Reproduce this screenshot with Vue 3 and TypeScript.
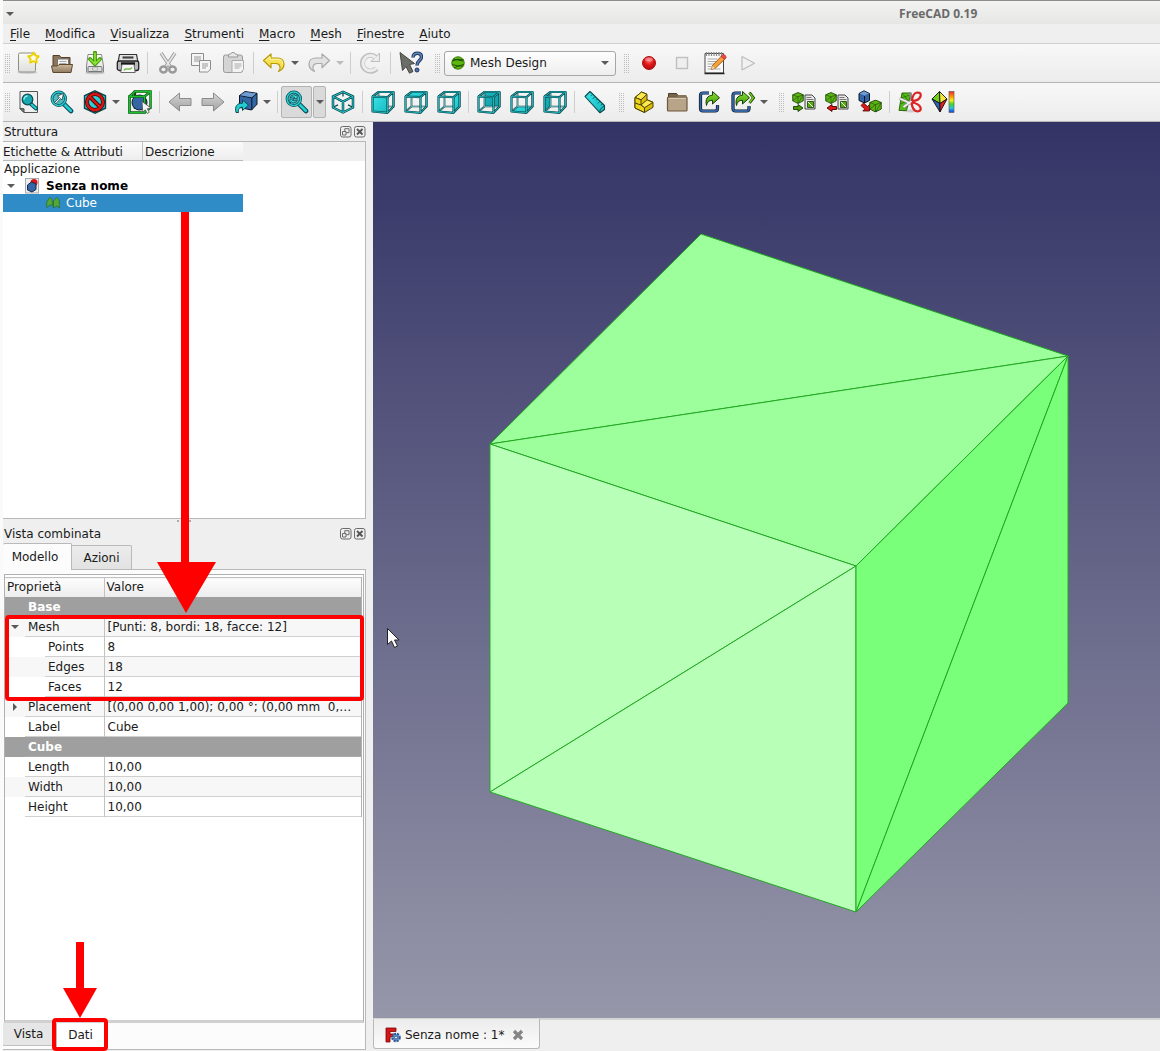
<script setup lang="ts">
import { ref } from 'vue'

type Kind = 'handle' | 'sep' | 'btn' | 'menu' | 'combo' | 'split'
interface Item {
  kind: Kind
  icon?: string
  label?: string
  off?: boolean
}
interface Row {
  name: string
  value?: string
  kind: 'group' | 'prop' | 'child'
  alt?: boolean
  arrow?: 'open' | 'closed'
  marked?: boolean
}

const b = (icon: string, label: string, off = false): Item => ({ kind: 'btn', icon, label, off })
const sep: Item = { kind: 'sep' }
const handle: Item = { kind: 'handle' }
const menu = (label: string, off = false): Item => ({ kind: 'menu', label, off })

const menus = ['File', 'Modifica', 'Visualizza', 'Strumenti', 'Macro', 'Mesh', 'Finestre', 'Aiuto']

const toolbars: Item[][] = [
  [
    handle, b('new', 'Nuovo'), b('open', 'Apri'), b('save', 'Salva'), b('print', 'Stampa'), sep,
    b('cut', 'Taglia', true), b('copy', 'Copia', true), b('paste', 'Incolla', true), sep,
    b('undo', 'Annulla'), menu('Cronologia annulla'), b('redo', 'Ripristina', true), menu('Cronologia ripristina', true), sep,
    b('refresh', 'Aggiorna', true), sep, b('whats', "Che cos'è?"),
    handle, { kind: 'combo' },
    handle, b('record', 'Registra macro'), b('stop', 'Ferma macro', true), b('edit', 'Modifica macro'), b('play', 'Esegui macro', true),
  ],
  [
    handle, b('fitall', 'Adatta tutto'), b('fitsel', 'Adatta selezione'), b('style', 'Stile'), menu('Stili'), b('bbox', 'Selezione'), sep,
    b('back', 'Indietro'), b('forward', 'Avanti'), b('link', 'Vai al collegamento'), menu('Collegamenti'), sep,
    { kind: 'split', icon: 'sync', label: 'Vista sincronizzata' }, b('iso', 'Isometrica'), sep,
    b('front', 'Frontale'), b('top', 'Superiore'), b('right', 'Destra'), sep,
    b('rear', 'Posteriore'), b('bottom', 'Inferiore'), b('left', 'Sinistra'), sep, b('ruler', 'Misura'),
    handle, b('part', 'Parte'), b('group', 'Gruppo'), b('export', 'Crea link'), b('exports', 'Azioni link'), menu('Link'),
    handle, b('mimport', 'Importa mesh'), b('mexport', 'Esporta mesh'), b('mshape', 'Crea mesh'), sep,
    b('mcut', 'Taglia mesh'), b('mcurv', 'Curvatura'),
  ],
]

const rows: Row[] = [
  { name: 'Base', kind: 'group' },
  { name: 'Mesh', value: '[Punti: 8, bordi: 18, facce: 12]', kind: 'prop', alt: true, arrow: 'open', marked: true },
  { name: 'Points', value: '8', kind: 'child' },
  { name: 'Edges', value: '18', kind: 'child', alt: true },
  { name: 'Faces', value: '12', kind: 'child' },
  { name: 'Placement', value: '[(0,00 0,00 1,00); 0,00 °; (0,00 mm  0,…', kind: 'prop', alt: true, arrow: 'closed' },
  { name: 'Label', value: 'Cube', kind: 'prop' },
  { name: 'Cube', kind: 'group' },
  { name: 'Length', value: '10,00', kind: 'prop' },
  { name: 'Width', value: '10,00', kind: 'prop', alt: true },
  { name: 'Height', value: '10,00', kind: 'prop' },
]

const workbench = ref('Mesh Design')
</script>

<template>
  <div class="window">
    <svg class="defs" aria-hidden="true">
      <defs>
        <linearGradient id="g-page" x1="0" y1="0" x2="0" y2="1"><stop offset="0" stop-color="#fbfbf8" /><stop offset="1" stop-color="#dededb" /></linearGradient>
        <linearGradient id="g-grey" x1="0" y1="0" x2="0" y2="1"><stop offset="0" stop-color="#d5d5d5" /><stop offset="1" stop-color="#a2a2a2" /></linearGradient>
        <linearGradient id="g-fold" x1="0" y1="0" x2="0" y2="1"><stop offset="0" stop-color="#cbb99e" /><stop offset="1" stop-color="#8f7a5e" /></linearGradient>
        <linearGradient id="g-teal" x1="0" y1="0" x2="1" y2="1"><stop offset="0" stop-color="#3ae4e8" /><stop offset="1" stop-color="#16b9bf" /></linearGradient>
        <linearGradient id="g-teald" x1="0" y1="0" x2="1" y2="1"><stop offset="0" stop-color="#1bb8bf" /><stop offset="1" stop-color="#129aa2" /></linearGradient>
        <linearGradient id="g-green" x1="0" y1="0" x2="0" y2="1"><stop offset="0" stop-color="#8be234" /><stop offset="1" stop-color="#3f9a06" /></linearGradient>
        <linearGradient id="g-rain" x1="0" y1="0" x2="0" y2="1"><stop offset="0" stop-color="#ef2929" /><stop offset=".25" stop-color="#ff9a00" /><stop offset=".42" stop-color="#f5ee20" /><stop offset=".6" stop-color="#46d32a" /><stop offset=".78" stop-color="#2ac5e0" /><stop offset="1" stop-color="#1a37d8" /></linearGradient>
        <radialGradient id="g-red" cx=".5" cy=".3" r=".7"><stop offset="0" stop-color="#ff7070" /><stop offset=".5" stop-color="#e01818" /><stop offset="1" stop-color="#b00808" /></radialGradient>
      </defs>

      <symbol id="i-new" viewBox="0 0 24 24"><ellipse cx="10.500" cy="21.500" rx="10" ry="1.500" fill="#ccc" /><rect x="1.500" y="2" width="17" height="19" rx="1.500" fill="url(#g-page)" stroke="#8d8d88" /><path d="M16.400 1.500l1.800 3.100 3.500.7-2.400 2.700.4 3.600-3.300-1.500-3.200 1.500.4-3.600-2.400-2.700 3.500-.7z" fill="#fffef0" stroke="#ecd200" stroke-width="1.900" stroke-linejoin="round" /></symbol>
      <symbol id="i-open" viewBox="0 0 24 24"><path d="M3 18V4.500h6.500l1.500 2h9V18z" fill="#8c7558" stroke="#553f24" /><rect x="7.500" y="8" width="11" height="8" fill="#f4f4f4" stroke="#777" /><path d="M9.500 10.500h7m-7 2h7" stroke="#aaa" /><path d="M1.500 15h6l1.500-1.500h13.500L21 21.500H3z" fill="url(#g-fold)" stroke="#5e482c" /></symbol>
      <symbol id="i-save" viewBox="0 0 24 24"><ellipse cx="12" cy="22" rx="10" ry="1.500" fill="#ccc" /><path d="M5 3.500h13.500L20.500 15v6h-17v-6z" fill="url(#g-page)" stroke="#888" /><rect x="5" y="15.500" width="14" height="5" rx="1" fill="#ddd" stroke="#777" /><rect x="9.500" y="17" width="5" height="2" fill="#fff" stroke="#888" stroke-width=".6" /><path d="M12 1.500v11M7 8l5 5.200L17 8" fill="none" stroke="#3f9a06" stroke-width="3.800" stroke-linejoin="round" stroke-linecap="round" /><path d="M12 2v10.500M7.200 8.300L12 13l4.800-4.700" fill="none" stroke="#8be234" stroke-width="1.700" stroke-linecap="round" /></symbol>
      <symbol id="i-print" viewBox="0 0 24 24"><path d="M3.500 3.500h17l1.500 8H2z" fill="#e4e4e4" stroke="#333" stroke-width="1.200" /><path d="M6.500 6.500h11" stroke="#444" stroke-width="2.200" /><rect x="1.300" y="10" width="21.400" height="9.500" rx="2" fill="#b9b9b9" stroke="#222" stroke-width="1.300" /><path d="M5 12.800h14" stroke="#181818" stroke-width="3" /><path d="M6 13.500h12l1.200 8H4.800z" fill="#f8f8f8" stroke="#666" /><path d="M8 19.500c2-4 5 1 8-3" stroke="#82c464" stroke-width="1.700" fill="none" /></symbol>
      <symbol id="i-cut" viewBox="0 0 24 24"><path d="M5 2l9.500 14M19 2L9.500 16" stroke="#999" stroke-width="3.400" /><path d="M5 2l9.500 14M19 2L9.500 16" stroke="#e7e7e7" stroke-width="1.600" /><g fill="none" stroke="#999" stroke-width="2.400"><ellipse cx="7.500" cy="18.500" rx="3.300" ry="3" /><ellipse cx="16.500" cy="18.500" rx="3.300" ry="3" /></g></symbol>
      <symbol id="i-copy" viewBox="0 0 24 24"><g fill="#f5f5f5" stroke="#8d8d8d"><path d="M2.500 2.500h12v12h-12z" /><path d="M10.500 9.500h11v9l-3 2.500h-8z" /></g><path d="M5 6h7M5 8h7M5 10h5M13 13h6m-6 2h6m-6 2h4" stroke="#999" /></symbol>
      <symbol id="i-paste" viewBox="0 0 24 24"><rect x="1.500" y="4" width="19" height="17.500" rx="2" fill="#d4d4d4" stroke="#9a9a9a" /><path d="M6.500 6V4q0-1 2-1 .5-1.500 2.500-1.500T13.500 3q2 0 2 1v2z" fill="#e8e8e8" stroke="#999" /><path d="M10 9.500h11.500v9L19 21.500h-9z" fill="#f4f4f4" stroke="#aaa" /><path d="M12.500 13h7m-7 2h7m-7 2h5" stroke="#aaa" /></symbol>
      <symbol id="i-undo" viewBox="0 0 24 24"><path d="M1.500 9.500L9 3v4h6.500c4 0 6.500 2.500 6.500 6s-2 6-5.500 7.500c1.500-1.500 2-3 1.500-5-.5-1.800-2-3-4-3H9v4.300z" fill="#f7e155" stroke="#b89a06" stroke-width="1.200" stroke-linejoin="round" /><path d="M3.500 9.500L8 5.700V8.300h8c3 0 4.500 2 4.700 4.200" fill="none" stroke="#fff6a8" /></symbol>
      <symbol id="i-redo" viewBox="0 0 24 24"><path transform="matrix(-1 0 0 1 24 0)" d="M1.500 9.500L9 3v4h6.500c4 0 6.500 2.500 6.500 6s-2 6-5.500 7.500c1.500-1.500 2-3 1.500-5-.5-1.800-2-3-4-3H9v4.300z" fill="#e2e2e2" stroke="#a9a9a9" stroke-width="1.200" stroke-linejoin="round" /></symbol>
      <symbol id="i-refresh" viewBox="0 0 24 24"><path d="M17.500 17.500A8 8 0 1 1 17 6.500" fill="none" stroke="#bdbdbd" stroke-width="5" /><path d="M20.500 2v8.500H12z" fill="#ececec" stroke="#bdbdbd" /><path d="M17.200 17.200A7.600 7.600 0 1 1 16.500 6.500" fill="none" stroke="#ededed" stroke-width="3" /></symbol>
      <symbol id="i-whats" viewBox="0 0 24 24"><path d="M1 1.500l14.500 11-5 1 3.500 7-3.500 1.700L7 15.500l-3.500 4z" fill="#6b6d68" stroke="#454743" /><path d="M14 6.500c.2-3 2-4.200 4.400-4.200 2.500 0 4.100 1.500 4.100 3.700 0 3.600-4.500 3.300-4.500 8.500" fill="none" stroke="#1d365d" stroke-width="3.400" /><path d="M14 6.300c.2-2.800 2-4 4.400-4 2.500 0 4.100 1.500 4.100 3.700 0 3.600-4.500 3.300-4.500 8" fill="none" stroke="#6288bd" stroke-width="1.400" /><circle cx="18" cy="19" r="2" fill="#4a70a5" stroke="#1d365d" /></symbol>
      <symbol id="i-record" viewBox="0 0 24 24"><circle cx="12" cy="12" r="6.500" fill="url(#g-red)" stroke="#b01010" /><ellipse cx="12" cy="8.500" rx="4" ry="2" fill="#fff" opacity=".3" /></symbol>
      <symbol id="i-stop" viewBox="0 0 24 24"><rect x="6.500" y="6.500" width="11" height="11" fill="#efefef" stroke="#bfbfbf" stroke-width="1.400" /></symbol>
      <symbol id="i-edit" viewBox="0 0 24 24"><path d="M2 2.500h18.500V22H2z" fill="#fafafa" stroke="#444" /><path d="M1.500 22.500h20" stroke="#222" stroke-width="1.500" /><path d="M3.500 1v4m2.500-4v4m2.500-4v4M11 1v4m2.500-4v4M16 1v4m2.500-4v4" stroke="#888" stroke-width="1.200" /><path d="M4.500 8h10m-10 2.500h9m-9 2.500h7m-7 2.500h4m-4 2.500h13" stroke="#aaa" /><path d="M8.500 18.500l1-4L19 4.500l3.500 3L12.500 17z" fill="#f6a23c" stroke="#9b5210" stroke-width=".9" /><path d="M18 5.500l3.300 3 2-2.200q-.5-2.500-3.300-3z" fill="#e84a4a" stroke="#b22" stroke-width=".6" /><path d="M8.500 18.500l1-3.500 2.500 2.300z" fill="#ead5a9" /></symbol>
      <symbol id="i-play" viewBox="0 0 24 24"><path d="M6 5.500v13.500l12.500-6.800z" fill="#f1f1f1" stroke="#bdbdbd" stroke-width="1.200" stroke-linejoin="round" /></symbol>

      <symbol id="glass" viewBox="0 0 24 24"><path d="M13.500 13.500l7.500 7.500" stroke="#0b4b50" stroke-width="4.600" stroke-linecap="round" /><path d="M13.500 13.500l7.300 7.300" stroke="#22cdd3" stroke-width="2.700" stroke-linecap="round" /><circle cx="8.800" cy="8.800" r="6.800" fill="#4fb9c0" stroke="#0b4b50" stroke-width="2.800" /><circle cx="8.800" cy="8.800" r="6.800" fill="none" stroke="#28ced4" stroke-width="1.400" /></symbol>
      <symbol id="i-fitall" viewBox="0 0 24 24"><path d="M3 1.500h17.500v21H7L3 18.500z" fill="#efefef" stroke="#555" /><path d="M3 18.500l4 .3v3.700z" fill="#888" stroke="#444" /><path d="M14 14l5 4.500" stroke="#0b4b50" stroke-width="4" stroke-linecap="round" /><path d="M14 14l4.700 4.300" stroke="#22cdd3" stroke-width="2.200" stroke-linecap="round" /><circle cx="10.500" cy="9.500" r="5.300" fill="#18a8b0" stroke="#0b4b50" stroke-width="1.200" /><path d="M7 9.500a3.500 3.500 0 0 1 3.500-3.500" stroke="#8ff2f4" stroke-width="1.500" fill="none" /></symbol>
      <symbol id="i-fitsel" viewBox="0 0 24 24"><use href="#glass" /><path d="M4.500 12.500l5-5L7.500 6l6-2.500-1.500 6.500-1.500-1.500-4.500 5z" fill="#fff" stroke="#244" stroke-width=".8" /></symbol>
      <symbol id="i-style" viewBox="0 0 24 24"><path d="M12 .8l10.500 5v12.400L12 23.200l-10.500-5V5.800z" fill="url(#g-teal)" stroke="#0b4b50" stroke-width="1.400" /><circle cx="12" cy="12" r="8" fill="none" stroke="#4d0000" stroke-width="4" /><path d="M6.500 6.500l11 11" stroke="#4d0000" stroke-width="4" /><circle cx="12" cy="12" r="8" fill="none" stroke="#d81515" stroke-width="2.400" /><path d="M6.500 6.500l11 11" stroke="#d81515" stroke-width="2.400" /></symbol>
      <symbol id="i-bbox" viewBox="0 0 24 24"><path d="M7 1.500h15.500v16H7z" fill="none" stroke="#0a4a12" stroke-width="2.400" /><circle cx="11.500" cy="12.500" r="7.500" fill="#3465a4" stroke="#0b1521" /><path d="M1.500 6.500h15v16h-15zM1.500 6.500L7 1.500M16.500 6.500l6-5M16.500 22.500l6-5" fill="none" stroke="#0a4a12" stroke-width="2.600" /><path d="M1.500 6.500h15v16h-15zM1.500 6.500L7 1.500h15.500l-6 5M22.500 1.500v16l-6 5" fill="none" stroke="#19c12d" stroke-width="1.300" /><path d="M14 11.500l9 6.500-3.700.8 2 3.500-2 1.200-2-3.700-2.500 2.500z" fill="#f4f4f4" stroke="#555" stroke-width=".8" /></symbol>
      <symbol id="i-back" viewBox="0 0 24 24"><path d="M1 12l10.500-9v5.500H23v7H11.500V21z" fill="url(#g-grey)" stroke="#8b8b8b" stroke-linejoin="round" /></symbol>
      <symbol id="i-forward" viewBox="0 0 24 24"><path d="M23 12L12.500 3v5.500H1v7h11.500V21z" fill="url(#g-grey)" stroke="#8b8b8b" stroke-linejoin="round" /></symbol>
      <symbol id="i-link" viewBox="0 0 24 24"><path d="M5.500 5.500L11 1.500l12 1.800v11L17.500 20l-12-2.500z" fill="#3465a4" stroke="#0b1521" /><path d="M5.500 5.500l12.300 2.300V20M17.800 7.800L23 3.500" fill="none" stroke="#0b1521" /><path d="M6 5.300L11.200 2l11 1.600-4.600 3.700z" fill="#6f9dd3" /><path d="M2 22.500c-1.500-6 1-9.500 6.500-9.300V10l6 5.200-6 5.300v-3.300c-3 0-4.700 1.800-4 5.300z" fill="#22cdd3" stroke="#0b4b50" /></symbol>
      <symbol id="i-sync" viewBox="0 0 24 24"><use href="#glass" /><path d="M5 7.800q.8-3 3.800-3 1.500 0 2.200 1l1.200-1.500v4.300H8.500l1.200-1.400Q7 6.300 5 7.800zM12.400 9.800q-.8 3-3.800 3-1.500 0-2.200-1l-1.400 1.500V9.100h3.700l-1.200 1.400q2.700.9 4.900-.7z" fill="#3cdfe3" stroke="#0b4b50" stroke-width=".8" /></symbol>
      <symbol id="i-iso" viewBox="0 0 24 24"><g fill="none" stroke-linejoin="round"><path d="M12 2v4.500M12 12L7.500 9.800M12 12l4.500-2.200M2.500 17l4.500-2.200M21.500 17l-4.500-2.200" stroke="#0b4b50" stroke-width="1.300" /><path d="M12 1.800L22 6.500v11L12 22.500l-10-5v-11zM2 6.500l10 5 10-5M12 11.500v11" stroke="#0b4b50" stroke-width="2.500" /><path d="M12 1.800L22 6.500v11L12 22.500l-10-5v-11zM2 6.500l10 5 10-5M12 11.500v11" stroke="#28cfd5" stroke-width="1" /></g></symbol>

      <symbol id="w-back" viewBox="0 0 24 24"><path d="M7.500 2h15v14.500h-15zM1.500 21.500l6-5" fill="none" stroke="#0b4b50" stroke-width="1.700" stroke-linejoin="round" /><path d="M7.500 2h15v14.500h-15zM1.500 21.500l6-5" fill="none" stroke="#9adfe1" stroke-width=".6" /></symbol>
      <symbol id="w-front" viewBox="0 0 24 24"><path d="M1.500 6.500l15 .7v15.600l-15-1.300zM1.500 6.500l6-4.500h15l-6 5.200M22.500 2v14.500l-6 6.300" fill="none" stroke="#0b4b50" stroke-width="2.200" stroke-linejoin="round" /><path d="M1.500 6.500l15 .7v15.600l-15-1.300zM1.500 6.500l6-4.500h15l-6 5.200M22.500 2v14.500l-6 6.300" fill="none" stroke="#22bcc2" stroke-width=".9" stroke-linejoin="round" /></symbol>
      <symbol id="i-front" viewBox="0 0 24 24"><use href="#w-back" /><path d="M1.500 6.500l15 .7v15.600l-15-1.300z" fill="url(#g-teal)" /><use href="#w-front" /></symbol>
      <symbol id="i-top" viewBox="0 0 24 24"><use href="#w-back" /><path d="M1.500 6.500l6-4.500h15l-6 5.200z" fill="url(#g-teal)" /><use href="#w-front" /></symbol>
      <symbol id="i-right" viewBox="0 0 24 24"><use href="#w-back" /><path d="M16.500 7.200l6-5.200v14.500l-6 6.300z" fill="url(#g-teal)" /><use href="#w-front" /></symbol>
      <symbol id="i-rear" viewBox="0 0 24 24"><path d="M7.500 2h15v14.500h-15z" fill="url(#g-teald)" /><use href="#w-back" /><use href="#w-front" /></symbol>
      <symbol id="i-bottom" viewBox="0 0 24 24"><path d="M1.500 21.500l6-5h15l-6 6.300z" fill="url(#g-teal)" /><use href="#w-back" /><use href="#w-front" /></symbol>
      <symbol id="i-left" viewBox="0 0 24 24"><path d="M1.500 6.500l6-4.500v14.500l-6 5z" fill="url(#g-teald)" /><use href="#w-back" /><use href="#w-front" /></symbol>
      <symbol id="i-ruler" viewBox="0 0 24 24"><path d="M2 6.500L7 1.500l14.500 14v4l-4.500 3.300z" fill="url(#g-teal)" stroke="#0b4b50" stroke-width="1.100" stroke-linejoin="round" /><path d="M17 22.800v-3.200l4.500-4M9.500 4.300L8 5.800m4 .8L9.800 8.800m4.700.2L13 10.500m4 .7l-2.200 2.200m4.700.3L18 15.200" stroke="#0b4b50" stroke-width=".9" fill="none" /></symbol>

      <symbol id="i-part" viewBox="0 0 24 24"><g stroke="#4c4000" stroke-width="1" stroke-linejoin="round"><path d="M3 7.500L9.500 2l5.500 2.300v5.500l6 2.500v5L12.500 22.500 3 18z" fill="#d9bd0b" /><path d="M3 7.500L9.500 2l5.500 2.300-6 5.500z" fill="#fce94f" /><path d="M9 15l6-5.200 6 2.500-8.500 5.500z" fill="#fce94f" /><path d="M3 7.500l6 2.300V15l3.500 2.800v4.700L3 18z" fill="#edd41f" /><path d="M3 13l6 2" fill="none" /></g></symbol>
      <symbol id="i-group" viewBox="0 0 24 24"><path d="M3.500 9V3.500h8L13 5.500h8V10" fill="#77664d" stroke="#4a3c28" /><rect x="2.500" y="7" width="19.500" height="14" rx="1" fill="#b7a489" stroke="#6d583c" stroke-width="1.200" /><path d="M3.500 8.500h17.500" stroke="#d6c9b5" /><path d="M11.500 7l1.500-2h8v2z" fill="#897557" /></symbol>
      <symbol id="arrowout" viewBox="0 0 24 24"><path d="M8.500 15.500C7 9 9.500 5.500 14.500 5.200V1.500l7 6.300-7 6.200v-3.700c-3.500 0-5.300 1.500-6 5.200z" fill="url(#g-green)" stroke="#173d04" stroke-linejoin="round" /></symbol>
      <symbol id="i-export" viewBox="0 0 24 24"><path d="M11 3H5Q2.500 3 2.500 5.500v13Q2.500 21 5 21h12q2.500 0 2.500-2.500V15" fill="none" stroke="#0b1521" stroke-width="3.200" /><path d="M11 3H5Q2.500 3 2.500 5.500v13Q2.500 21 5 21h12q2.500 0 2.500-2.500V15" fill="none" stroke="#3465a4" stroke-width="1.800" /><use href="#arrowout" /></symbol>
      <symbol id="i-exports" viewBox="0 0 24 24"><path d="M10 3H4.500Q2 3 2 5.500v13Q2 21 4.500 21h11q2.500 0 2.500-2.500V16" fill="none" stroke="#0b1521" stroke-width="3.200" /><path d="M10 3H4.500Q2 3 2 5.500v13Q2 21 4.500 21h11q2.500 0 2.500-2.500V16" fill="none" stroke="#3465a4" stroke-width="1.800" /><use href="#arrowout" x="-3" width="24" height="24" /><path d="M18.500 2.500l4 5.300-4 5.200" fill="none" stroke="#173d04" stroke-width="2.800" /><path d="M18.500 2.800l3.800 5-3.800 4.900" fill="none" stroke="#73d216" stroke-width="1.400" /></symbol>

      <symbol id="gem" viewBox="0 0 12 12"><path d="M6 .5l5.300 2.300v6L6 11.500.7 8.800v-6z" fill="#5bb313" stroke="#173d04" stroke-width=".8" /><path d="M.7 2.800l5.300 2 5.300-2L6 11.500M6 4.800L.7 8.800M6 4.800v6.500" fill="none" stroke="#173d04" stroke-width=".5" /></symbol>
      <symbol id="doc" viewBox="0 0 12 16"><path d="M1 1h7l3 3v11H1z" fill="#e8e8e8" stroke="#444" /><path d="M2.500 3.500h5m-5 2h7" stroke="#777" /><path d="M3.500 7.500h6v6h-6z" fill="#57ab12" stroke="#173d04" stroke-width=".8" /><path d="M4 8l5 5" stroke="#fff" /></symbol>
      <symbol id="i-mimport" viewBox="0 0 24 24"><use href="#gem" x="0" y="2" width="12" height="12" /><use href="#doc" x="12" y="4" width="12" height="16" /><path d="M1.500 16.500H6V14.500l5 3.500-5 3.500v-2H1.500z" fill="#4e9a06" stroke="#173d04" stroke-width=".9" /></symbol>
      <symbol id="i-mexport" viewBox="0 0 24 24"><use href="#gem" x="0" y="2" width="12" height="12" /><use href="#doc" x="12" y="4" width="12" height="16" /><path d="M11.500 16.500H7v-2L2 18l5 3.500v-2h4.500z" fill="#e01818" stroke="#4d0000" stroke-width=".9" /></symbol>
      <symbol id="i-mshape" viewBox="0 0 24 24"><path d="M1 3.500L6 .8l5.500 2.700v7L6.500 13 1 10.500z" fill="#3465a4" stroke="#0b1521" /><path d="M1.500 3.500L6 1.300l5 2.200-4.500 2z" fill="#6f9dd3" /><path d="M6.500 6v7" stroke="#0b1521" /><path d="M3 15.500L5.500 13l4 3.500 2-2V21H4.800l2-2z" fill="#e01818" stroke="#4d0000" stroke-width=".8" /><use href="#gem" x="11" y="9.500" width="13" height="13" /></symbol>
      <symbol id="i-mcut" viewBox="0 0 24 24"><ellipse cx="13" cy="21" rx="9" ry="1.500" fill="#ccc" /><path d="M4 3h9L8.500 20.500H1z" fill="#57b91b" stroke="#2b7006" /><path d="M3 8l9-3M2 14l9-3.500M4 3l6.500 8" stroke="#2b7006" stroke-width=".8" /><path d="M1.500 8.500L13 13.500M5.500 17L14 11 12 2.500" stroke="#888" stroke-width="2.800" fill="none" /><path d="M1.500 8.500L13 13.500M5.500 17L14 11" stroke="#f1f1f1" stroke-width="1.700" /><g fill="none" stroke="#d22" stroke-width="2.200"><path d="M14 11q.5-8 5.500-8.500 4 0 3 4Q21 10.500 14 11.200" /><path d="M13.500 12.500q1 8.500 6 9 4-.5 3-4-1.500-4-9-5" /></g></symbol>
      <symbol id="i-mcurv" viewBox="0 0 24 24"><g stroke="#111" stroke-width=".9" stroke-linejoin="round"><path d="M8.500 1.500L1 9l8 4.500z" fill="#6fcf1b" /><path d="M8.500 1.500L9 13.500 16 9z" fill="#f5e63c" /><path d="M1 9l8 4.500V22z" fill="#2f62b0" /><path d="M16 9l-7 4.500V22z" fill="#e02020" /></g><rect x="18" y="1.500" width="5" height="21" fill="url(#g-rain)" stroke="#555" stroke-width=".6" /></symbol>

      <symbol id="dockbtns" viewBox="0 0 26 12"><g fill="none" stroke="#6b6b6b"><rect x=".5" y=".5" width="10.500" height="10.500" rx="2" /><rect x="14.500" y=".5" width="10.500" height="10.500" rx="2" /><path d="M2.500 5.500h3.500v3.500H2.500z" /><path d="M4.800 5.500V2.700h4.200v4H6" /><path d="M17 3l5.500 5.500M22.500 3L17 8.500" stroke="#555" stroke-width="1.900" /></g></symbol>
    </svg>

    <header class="titlebar"><i class="caret"></i><h1>FreeCAD 0.19</h1></header>

    <nav class="menubar">
      <a v-for="m in menus" :key="m" href="#"><u>{{ m[0] }}</u>{{ m.slice(1) }}</a>
    </nav>

    <div v-for="(bar, n) in toolbars" :key="n" class="toolbar" role="toolbar">
      <template v-for="(it, i) in bar" :key="i">
        <i v-if="it.kind === 'handle'" class="handle"></i>
        <i v-else-if="it.kind === 'sep'" class="sep"></i>
        <button v-else-if="it.kind === 'btn'" class="tool" type="button" :aria-label="it.label" :disabled="it.off">
          <svg width="24" height="24"><use :href="'#i-' + it.icon" /></svg>
        </button>
        <button v-else-if="it.kind === 'menu'" class="drop" type="button" :aria-label="it.label" :disabled="it.off"><i class="caret"></i></button>
        <div v-else-if="it.kind === 'split'" class="split">
          <button type="button" class="main" :aria-label="it.label"><svg width="24" height="24"><use :href="'#i-' + it.icon" /></svg></button>
          <button type="button" class="more" aria-label="Altre opzioni"><i class="caret"></i></button>
        </div>
        <div v-else class="combo">
          <svg class="ball" width="14" height="14" viewBox="0 0 14 14"><circle cx="7" cy="7" r="6.200" fill="#5cb80c" stroke="#3c7d06" /><path d="M1 5q6-3 12-1M1 8.500q6 3 12 0M3 12q4-3 9-2M2 3l10 2" fill="none" stroke="#1f5203" stroke-width="1" /></svg>
          <select v-model="workbench" aria-label="Ambiente"><option>Mesh Design</option></select>
          <i class="caret"></i>
        </div>
      </template>
    </div>

    <div class="body">
      <aside class="docks">
        <section class="dock">
          <div class="docktitle"><h2>Struttura</h2><svg width="26" height="12"><use href="#dockbtns" /></svg></div>
          <div class="tree">
            <div class="treehead"><span>Etichette &amp; Attributi</span><span>Descrizione</span></div>
            <ul>
              <li class="root">Applicazione</li>
              <li class="docrow">
                <i class="caret"></i>
                <svg width="14" height="16" viewBox="0 0 14 16"><rect x=".5" y=".5" width="13" height="14.500" fill="#eee" stroke="#aaa" /><circle cx="9" cy="4.500" r="3.500" fill="#d81515" /><path d="M2.500 7L6.500 4l4.500 2v5.500L7 14l-4.500-2z" fill="#3465a4" stroke="#152a4a" /></svg>
                <b>Senza nome</b>
              </li>
              <li class="selected">
                <svg width="14" height="14" viewBox="0 0 14 14"><path d="M.7 11.500V6l3-4.500 2 1 1.500 8L5 8.500zM7.500 12V5l3-3.500L13.300 4v8l-2.500-2z" fill="#54a838" stroke="#236a2a" stroke-width=".7" /></svg>
                <span>Cube</span>
              </li>
            </ul>
          </div>
        </section>

        <section class="dock second">
          <i class="grip"></i>
          <div class="docktitle"><h2>Vista combinata</h2><svg width="26" height="12"><use href="#dockbtns" /></svg></div>
          <div class="tabs">
            <button type="button" class="active">Modello</button><button type="button">Azioni</button>
          </div>
          <div class="panel">
            <div class="propframe">
              <table class="props">
                <colgroup><col class="c1" /><col /></colgroup>
                <thead><tr><th>Proprietà</th><th>Valore</th></tr></thead>
                <tbody>
                  <tr v-for="r in rows" :key="r.kind + r.name" :class="[r.kind, { alt: r.alt }]">
                    <td v-if="r.kind === 'group'" colspan="2"><div class="name">{{ r.name }}</div></td>
                    <template v-else>
                      <td>
                        <i v-if="r.arrow" :class="['twist', r.arrow]"></i>
                        <i v-if="r.marked" class="mark"></i>
                        <div class="name">{{ r.name }}</div>
                      </td>
                      <td><div class="value">{{ r.value }}</div></td>
                    </template>
                  </tr>
                </tbody>
              </table>
            </div>
            <div class="bottomtabs">
              <button type="button">Vista</button>
              <button type="button" class="active">Dati
                <svg class="arrow2" width="34" height="76" viewBox="0 0 34 76"><path d="M13 0h8v46h13L17 76 0 46h13z" fill="#f00" /></svg>
                <i class="mark2"></i>
              </button>
            </div>
          </div>
        </section>
        <svg class="arrow1" width="60" height="401" viewBox="0 0 60 401"><path d="M24 0h8v350h27L29 401 0 350h24z" fill="#f00" /></svg>
      </aside>

      <main class="view">
        <div class="scene">
          <svg class="model" viewBox="0 0 787 896" role="img" aria-label="Cubo mesh">
            <g stroke="#22a822" stroke-width="1" stroke-linejoin="round">
              <path d="M328 112L695 234 117 322z" fill="#9cff9c" />
              <path d="M695 234L483 444 117 322z" fill="#9cff9c" />
              <path d="M117 322L483 444 117 670z" fill="#b8ffb8" />
              <path d="M483 444V790L117 670z" fill="#b8ffb8" />
              <path d="M483 444L695 234 483 790z" fill="#7aff7a" />
              <path d="M695 234V581L483 790z" fill="#7aff7a" />
            </g>
            <path d="M14.500 506.500v16l4-3.500 3 6.500 3-1.500-3-6h4.500z" fill="#fff" stroke="#222" />
          </svg>
        </div>
        <div class="docbar">
          <div class="doctab">
            <svg width="16" height="16" viewBox="0 0 16 16"><path d="M1 1h10v3.500H5v2.500h4v3H5v5H1z" fill="#d81515" stroke="#7a0808" stroke-width=".8" /><circle cx="11" cy="10.500" r="3.700" fill="#729fcf" stroke="#2f5a96" stroke-width="2.200" stroke-dasharray="2 1" /><circle cx="11" cy="10.500" r="1.500" fill="#e9eef5" stroke="#2f5a96" /></svg>
            <span>Senza nome : 1*</span>
            <button type="button" aria-label="Chiudi"><svg width="12" height="12" viewBox="0 0 12 12"><path d="M2 2l8 8M10 2l-8 8" stroke="#858585" stroke-width="3.200" /></svg></button>
          </div>
        </div>
      </main>
    </div>
  </div>
</template>

<style>
html, body { margin: 0; background: #efefef; }
</style>

<style scoped>
* { box-sizing: border-box; }
.window {
  display: flex; flex-direction: column; min-height: 100vh;
  font: 12px/16px "DejaVu Sans", sans-serif; color: #1a1a1a;
  background: #efefef; border-left: 3px solid #fafafa;
}
.defs { position: absolute; width: 0; height: 0; }
button { font: inherit; color: inherit; border: 0; background: none; padding: 0; margin: 0; }
h1, h2 { margin: 0; font-size: 12px; font-weight: normal; }
.caret { display: block; width: 0; height: 0; border: 4px solid transparent; border-top-color: #5a5a5a; border-bottom: 0; }

.titlebar {
  display: flex; align-items: center; height: 24px; padding: 3px 3px 0;
  border-top: 1px solid #8e8e8e; background: linear-gradient(#f3f3f1, #e6e6e4);
}
.titlebar h1 { flex: 1; padding-left: 61%; margin-left: 183px; font: bold 12px/16px "Open Sans", "Noto Sans", sans-serif; color: #6a6a6a; white-space: nowrap; }

.menubar { display: flex; gap: 1px; height: 20px; align-items: center; border-bottom: 1px solid #cfcfcf; }
.menubar a { padding: 0 7px; color: inherit; text-decoration: none; line-height: 20px; }
.menubar u { text-underline-offset: 2px; }

.toolbar {
  display: flex; align-items: center; height: 39px;
  background: linear-gradient(#f8f8f8, #ececec); border-bottom: 1px solid #b5b5b5;
}
.tool { display: flex; justify-content: center; align-items: center; width: 33px; height: 32px; flex: none; }
.drop { display: flex; align-items: center; width: 12px; height: 32px; padding-left: 1px; }
.drop:disabled { opacity: .35; }
.handle {
  flex: none; width: 5px; height: 19px; margin: 0 3px 0 8px;
  background: conic-gradient(transparent 75%, #bdbdbd 0) 0 0 / 2px 2px;
}
.handle:first-child { margin: 0 2px; }
.sep { flex: none; width: 1px; height: 22px; margin: 0 3px; background: #cecece; }
.split { display: flex; gap: 1px; height: 32px; }
.split button { display: flex; align-items: center; justify-content: center; border: 1px solid #b3b3b3; background: #dadada; border-radius: 2px; }
.split .main { width: 31px; }
.split .more { width: 13px; }
.combo { position: relative; width: 172px; height: 25px; margin-left: 1px; }
.combo select {
  appearance: none; width: 100%; height: 25px; padding: 0 20px 0 25px; font: inherit; color: inherit;
  border: 1px solid #a6a6a6; border-radius: 3px; background: linear-gradient(#fdfdfd, #eee);
}
.combo .ball { position: absolute; left: 7px; top: 5px; }
.combo .caret { position: absolute; right: 7px; top: 10px; pointer-events: none; }

.body { display: flex; flex: 1; }
.docks { position: relative; flex: none; width: 370px; display: grid; grid-template-rows: 3fr 4fr; }
.dock { display: flex; flex-direction: column; padding-right: 7px; min-height: 0; }
.docktitle { display: flex; align-items: center; justify-content: space-between; height: 19px; padding: 0 0 0 1px; }
.tree { flex: 1; background: #fff; border: 1px solid #b9b9b9; border-left: 0; margin-bottom: 1px; }
.treehead { display: flex; height: 19px; background: #efefef; }
.treehead span { line-height: 20px; border-bottom: 1px solid #b9b9b9; background: linear-gradient(#fbfbfb, #ededed); }
.treehead span:first-child { width: 140px; border-right: 1px solid #c4c4c4; }
.treehead span:last-child { width: 100px; padding-left: 2px; }
.tree ul { list-style: none; margin: 0; padding: 0; width: 240px; }
.tree li { display: flex; align-items: center; height: 18px; }
.tree .root { height: 16px; padding-left: 1px; }
.tree .docrow { height: 17px; }
.docrow .caret { margin: 0 10px 0 4px; }
.docrow b { margin-left: 7px; color: #000; }
.tree .selected { background: #308cc6; color: #fff; padding-left: 43px; gap: 6px; }

.second { position: relative; padding-top: 4px; }
.grip { position: absolute; left: 174px; top: 0; width: 16px; height: 3px; background: radial-gradient(circle at 1px 1px, #aaa 1px, transparent 1px) 0 0 / 4px 3px; }
.tabs { display: flex; align-items: flex-end; height: 27px; border-bottom: 1px solid #b9b9b9; }
.tabs button { height: 24px; width: 60px; border: 1px solid #b9b9b9; border-left: 0; border-bottom: 0; background: linear-gradient(#ececec, #e2e2e2); border-radius: 0 2px 0 0; }
.tabs .active { height: 27px; width: 69px; margin-bottom: -1px; padding: 0 4px 0 0; background: #fcfcfc; border-radius: 2px 2px 0 0; }
.panel { flex: 1; display: flex; flex-direction: column; background: #fcfcfc; border-right: 1px solid #b9b9b9; border-bottom: 1px solid #b9b9b9; padding: 4px 1px 0 0; margin-bottom: 1px; }
.propframe { position: relative; flex: 1; padding: 2px 1px 0 0; background: #fff; border: 1px solid #b0b0b0; border-bottom: 3px solid #d0d0d0; margin-left: 1px; }
.props { width: 100%; table-layout: fixed; border-collapse: collapse; border-right: 1px solid #b0b0b0; border-top: 1px solid #c0c0c0; }
.c1 { width: 99px; }
.props th { height: 19px; padding: 0 2px; text-align: left; font-weight: normal; background: linear-gradient(#fdfdfd, #ececec); }
.props th:first-child, .props tr:not(.group) td:first-child { border-right: 1px solid #c2c2c2; }
.props td { position: relative; padding: 0; height: 20px; }
.name { height: 20px; margin-left: 20px; padding-left: 3px; line-height: 20px; border-bottom: 1px solid #d0d0d0; }
.value { height: 20px; padding-left: 3px; line-height: 20px; border-bottom: 1px solid #d0d0d0; white-space: pre; }
.child .name { margin-left: 40px; }
.alt { background: #f7f7f7; }
.group { background: #9f9f9f; color: #fff; font-weight: bold; }
.group .name { border-color: #aaa; }
.twist { position: absolute; width: 0; height: 0; border: 4px solid transparent; }
.twist.open { left: 6px; top: 8px; border-top-color: #5a5a5a; border-bottom: 0; }
.twist.closed { left: 8px; top: 6px; border-left-color: #5a5a5a; border-right: 0; }
.mark { position: absolute; z-index: 2; left: 0; top: -2px; width: 359px; height: 86px; border: 4px solid #f00; border-radius: 4px; }
.bottomtabs { display: flex; height: 26px; }
.bottomtabs button { position: relative; width: 51px; height: 23px; background: #e6e6e6; border-bottom: 1px solid #c0c0c0; }
.bottomtabs .active { width: 49px; height: 25px; background: #fff; border: 1px solid #b9b9b9; border-top: 0; margin-left: 2px; }
.arrow2 { position: absolute; left: 6px; bottom: 29px; }
.mark2 { position: absolute; left: -5px; top: -5px; width: 56px; height: 33px; border: 4px solid #f00; border-radius: 4px; }
.arrow1 { position: absolute; left: 154px; top: 90px; }

.view { flex: 1; display: flex; flex-direction: column; min-width: 0; }
.scene { flex: 1; display: flex; background: linear-gradient(#333366, #9797aa); }
.model { width: 100%; height: auto; align-self: center; }
.docbar { height: 33px; border-top: 2px solid #d4d4d4; }
.doctab { display: flex; align-items: center; width: 167px; height: 30px; margin-top: -1px; padding: 2px 11px 0; gap: 4px; background: linear-gradient(#ececec, #fbfbfb); border: 1px solid #b9b9b9; border-top: 0; border-radius: 0 0 3px 3px; white-space: nowrap; }
.doctab button { display: flex; margin-left: 4px; }
</style>
